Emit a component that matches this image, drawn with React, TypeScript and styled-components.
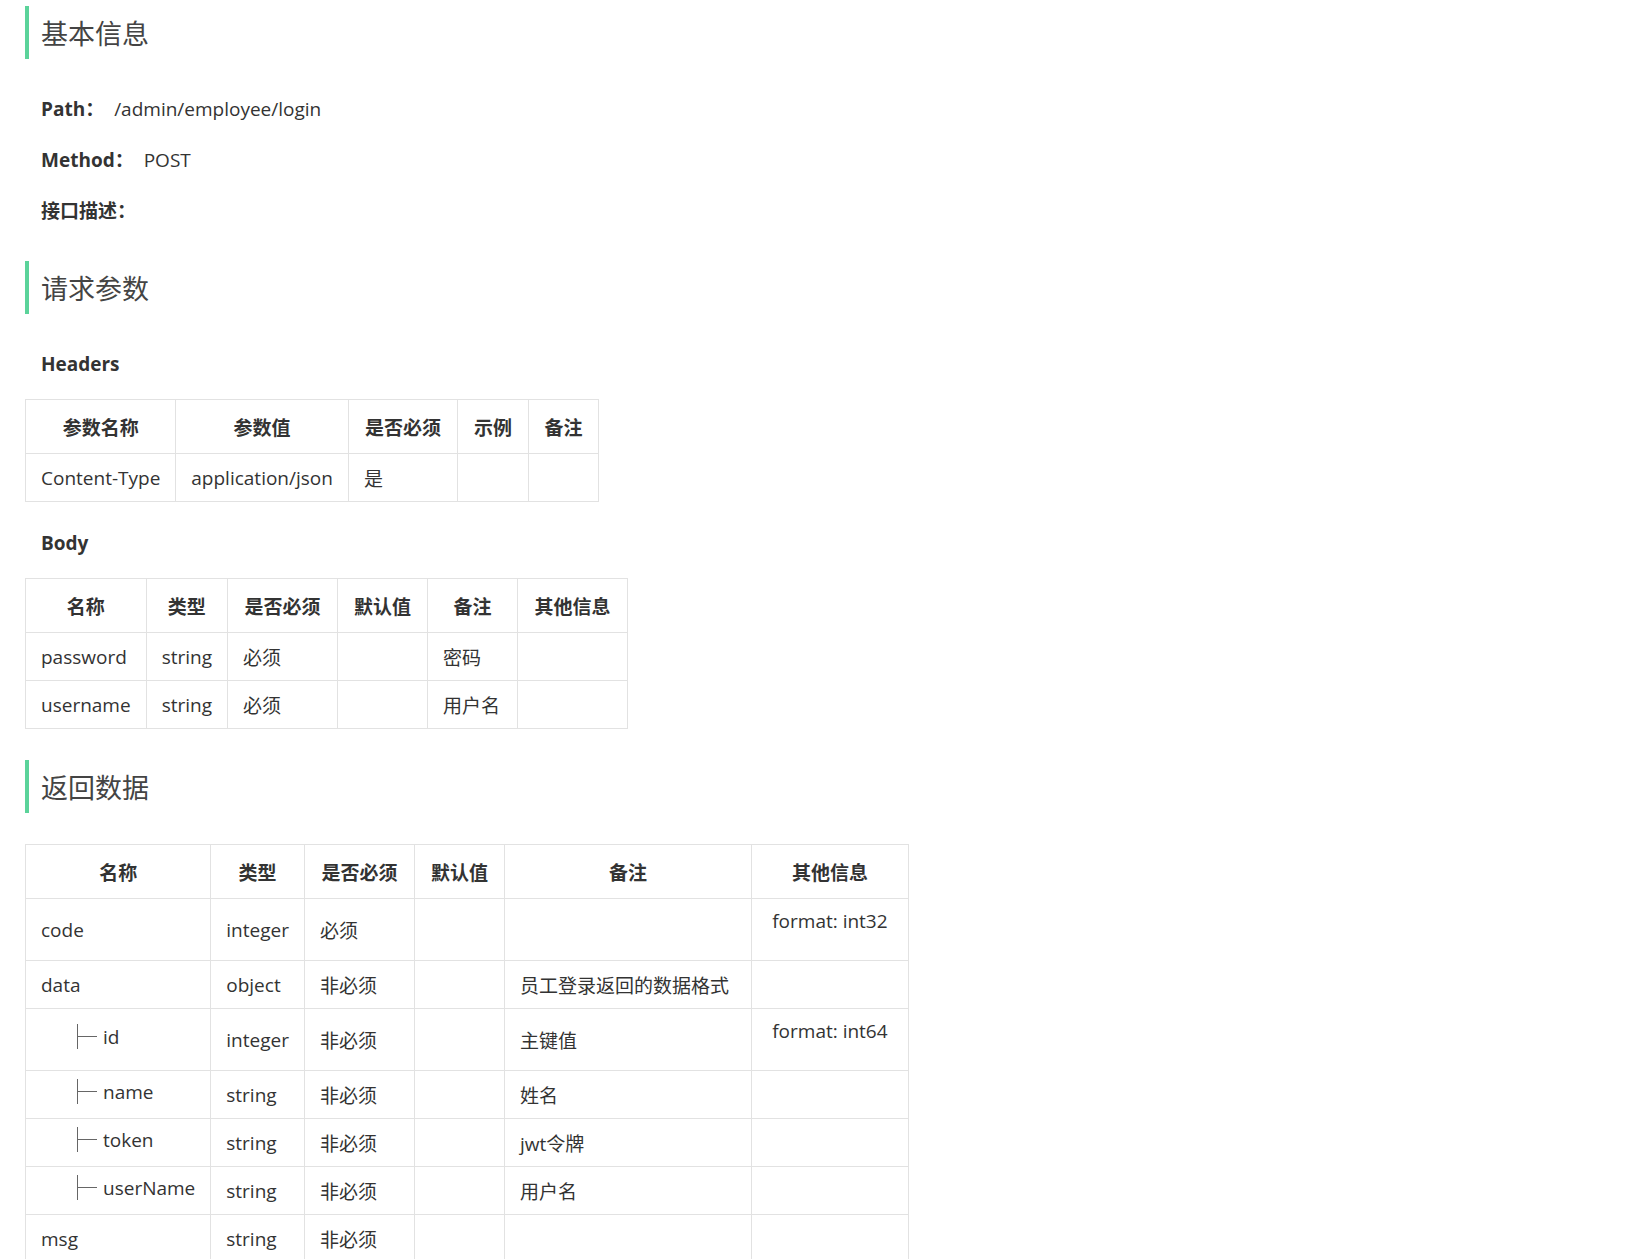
import React from "react";
import styled, { createGlobalStyle } from "styled-components";

const Global = createGlobalStyle`
  body {
    margin: 0;
    background: #fff;
    font-family: "Open Sans", "Noto Sans CJK SC", sans-serif;
    color: #333;
  }
`;

const Page = styled.div`
  padding: 6px 25px 40px;
`;

const Heading = styled.h2<{ $top?: number }>`
  margin: ${(p) => p.$top ?? 0}px 0 0;
  height: 53px;
  display: flex;
  align-items: center;
  border-left: 4px solid #5bd39a;
  padding-left: 12px;
  font-size: 27px;
  font-weight: 400;
  color: #444;
`;

const Line = styled.p<{ $top: number }>`
  margin: ${(p) => p.$top}px 0 0 16px;
  font-size: 19px;
  line-height: 27px;
  color: #333;
`;

const Label = styled.b`
  font-weight: 700;
  margin-right: 10px;
`;

const Table = styled.table<{ $top: number }>`
  margin-top: ${(p) => p.$top}px;
  border-collapse: collapse;
  font-size: 19px;
  table-layout: fixed;
`;

const Th = styled.th`
  border: 1px solid #e2e2e2;
  height: 53px;
  padding: 0 8px;
  font-weight: 700;
  color: #333;
  text-align: center;
  white-space: nowrap;
`;

const Td = styled.td`
  border: 1px solid #e2e2e2;
  height: 47px;
  padding: 0 15px;
  color: #333;
  white-space: nowrap;
  vertical-align: middle;
`;

const OtherTd = styled(Td)`
  vertical-align: top;
  padding-top: 10px;
  text-align: center;
`;

const Format = styled.div`
  line-height: 25px;
  padding-bottom: 26px;
`;

const Tree = styled.span`
  display: inline-flex;
  align-items: center;
  gap: 4px;
  padding-left: 36px;
`;

const Branch = styled.span`
  display: inline-block;
  width: 21px;
  height: 25px;
  border-left: 1.5px solid #666;
  position: relative;
  &::after {
    content: "";
    position: absolute;
    left: 0;
    top: 12px;
    width: 19px;
    border-top: 1.5px solid #666;
  }
`;

const headerCols = [149, 170, 109, 71, 70];
const bodyCols = [116, 80, 110, 90, 90, 110];
const retCols = [183, 92, 110, 90, 247, 157];

const ret: [string, boolean, string, string, string, string][] = [
  ["code", false, "integer", "必须", "", "format: int32"],
  ["data", false, "object", "非必须", "员工登录返回的数据格式", ""],
  ["id", true, "integer", "非必须", "主键值", "format: int64"],
  ["name", true, "string", "非必须", "姓名", ""],
  ["token", true, "string", "非必须", "jwt令牌", ""],
  ["userName", true, "string", "非必须", "用户名", ""],
  ["msg", false, "string", "非必须", "", ""],
];

export default function App() {
  return (
    <Page>
      <Global />
      <Heading>基本信息</Heading>
      <Line $top={37}><Label>Path：</Label>/admin/employee/login</Line>
      <Line $top={24}><Label>Method：</Label>POST</Line>
      <Line $top={24}><Label>接口描述：</Label></Line>
      <Heading $top={36}>请求参数</Heading>
      <Line $top={37}><Label>Headers</Label></Line>
      <Table $top={21}>
        <colgroup>{headerCols.map((w, i) => <col key={i} style={{ width: w }} />)}</colgroup>
        <thead>
          <tr>{["参数名称", "参数值", "是否必须", "示例", "备注"].map((h) => <Th key={h}>{h}</Th>)}</tr>
        </thead>
        <tbody>
          <tr><Td>Content-Type</Td><Td>application/json</Td><Td>是</Td><Td /><Td /></tr>
        </tbody>
      </Table>
      <Line $top={28}><Label>Body</Label></Line>
      <Table $top={21}>
        <colgroup>{bodyCols.map((w, i) => <col key={i} style={{ width: w }} />)}</colgroup>
        <thead>
          <tr>{["名称", "类型", "是否必须", "默认值", "备注", "其他信息"].map((h) => <Th key={h}>{h}</Th>)}</tr>
        </thead>
        <tbody>
          <tr><Td>password</Td><Td>string</Td><Td>必须</Td><Td /><Td>密码</Td><Td /></tr>
          <tr><Td>username</Td><Td>string</Td><Td>必须</Td><Td /><Td>用户名</Td><Td /></tr>
        </tbody>
      </Table>
      <Heading $top={31}>返回数据</Heading>
      <Table $top={31}>
        <colgroup>{retCols.map((w, i) => <col key={i} style={{ width: w }} />)}</colgroup>
        <thead>
          <tr>{["名称", "类型", "是否必须", "默认值", "备注", "其他信息"].map((h) => <Th key={h}>{h}</Th>)}</tr>
        </thead>
        <tbody>
          {ret.map(([name, child, type, req, note, other]) => (
            <tr key={name}>
              <Td>{child ? <Tree><Branch />{name}</Tree> : name}</Td>
              <Td>{type}</Td>
              <Td>{req}</Td>
              <Td />
              <Td>{note}</Td>
              {other ? <OtherTd><Format>{other}</Format></OtherTd> : <Td />}
            </tr>
          ))}
        </tbody>
      </Table>
    </Page>
  );
}
